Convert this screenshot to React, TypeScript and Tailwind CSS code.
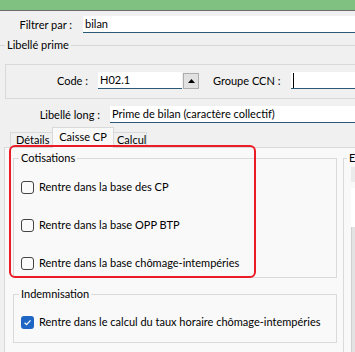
import React from 'react'

function Check({ checked, label }: { checked?: boolean; label: string }) {
  return (
    <div className="flex items-center h-[14px] ml-[7px]">
      {checked ? (
        <div className="w-[13px] h-[13px] rounded-[3px] bg-[#1f66c4] flex items-center justify-center">
          <svg width="9" height="9" viewBox="0 0 9 9">
            <path d="M1.6 4.7 L3.6 6.6 L7.5 2.4" fill="none" stroke="white" strokeWidth="1.2" />
          </svg>
        </div>
      ) : (
        <div className="w-[13px] h-[13px] rounded-[3px] border border-[#444444] bg-[#fbfbfb]" />
      )}
      <span className="ml-[5px] whitespace-nowrap">{label}</span>
    </div>
  )
}

function Input({ value, className = '', cursor }: { value?: string; className?: string; cursor?: boolean }) {
  return (
    <div className={`h-[17px] bg-white border-b border-[#2b5a78] flex items-center pl-[2px] whitespace-nowrap overflow-hidden ${className}`}>
      {cursor && <div className="w-px h-[15px] bg-black" />}
      {value}
    </div>
  )
}

export default function App() {
  return (
    <div className="relative w-[355px] h-[352px] overflow-hidden bg-[#f0f0f0] text-[11px] leading-[14px] text-black [font-family:Lato,'Liberation_Sans',sans-serif]">
      <div className="h-[10px] bg-[#80c080]" />
      <div className="h-px bg-[#6b6b6b]" />

      {/* filtre */}
      <div className="flex items-center h-[17px] mt-[5px]">
        <span className="w-[72px] text-right">Filtrer par :</span>
        <Input value="bilan" className="ml-[11px] flex-1" />
      </div>

      <fieldset className="mt-[5px] border-t border-[#d6d6d6] w-[420px]">
        <legend className="ml-[5px] px-[2px]">Libellé prime</legend>
        <div className="mt-[12px] ml-[5px] h-[35px] border border-[#d9d9d9] flex items-start pt-[7px]">
          <span className="w-[82px] h-[17px] flex items-center justify-end">Code :</span>
          <Input value="H02.1" className="ml-[10px] w-[84px]" />
          <div className="ml-[1px] mt-[1px] w-[16px] h-[16px] border border-[#adadad] bg-[#e1e1e1] flex items-center justify-center">
            <svg width="7" height="4" viewBox="0 0 7 4">
              <path d="M0 4 L3.5 0 L7 4 Z" fill="#000" />
            </svg>
          </div>
          <span className="ml-[14px] h-[17px] flex items-center whitespace-nowrap">Groupe CCN :</span>
          <Input cursor className="ml-[11px] flex-1" />
        </div>
        <div className="mt-[7px] flex items-center h-[17px]">
          <span className="w-[100px] text-right">Libellé long :</span>
          <Input value="Prime de bilan (caractère collectif)" className="ml-[10px] flex-1" />
        </div>
      </fieldset>

      {/* onglets */}
      <div className="mt-[4px] flex items-end h-[20px]">
        <div className="ml-[10px] h-[15px] w-[42px] pl-[5px] border-l border-t border-[#d9d9d9] flex items-center">Détails</div>
        <div className="relative -mb-px h-[21px] w-[62px] border border-b-0 border-[#d9d9d9] bg-[#f9f9f9] flex justify-center pt-[2px]">
          Caisse CP
        </div>
        <div className="h-[15px] pl-[3px] w-[33px] border-r border-t border-[#d9d9d9] flex items-center">Calcul</div>
      </div>

      <div className="ml-[4px] h-[220px] border-l border-t border-[#d9d9d9] bg-[#f9f9f9] flex pl-[8px] pt-[3px]">
        <div className="w-[324px] shrink-0">
          <fieldset className="border border-[#dadada] pb-[7px]">
            <legend className="ml-[5px] px-[2px]">Cotisations</legend>
            <div className="mt-[15px] flex flex-col gap-[24px]">
              <Check label="Rentre dans la base des CP" />
              <Check label="Rentre dans la base OPP BTP" />
              <Check label="Rentre dans la base chômage-intempéries" />
            </div>
          </fieldset>
          <fieldset className="mt-[9px] border border-[#dadada] pb-[13px]">
            <legend className="ml-[5px] px-[2px]">Indemnisation</legend>
            <div className="mt-[14px]">
              <Check checked label="Rentre dans le calcul du taux horaire chômage-intempéries" />
            </div>
          </fieldset>
        </div>
        <fieldset className="ml-[6px] w-[60px] shrink-0 border-l border-t border-[#dadada]">
          <legend className="ml-[3px] pl-[2px] pr-0">E</legend>
          <div className="ml-[7px] mt-[2px] h-[15px] bg-[#ebebeb]" />
          <div className="ml-[7px] mt-[6px] h-[39px] bg-white" />
          <div className="ml-[7px] h-[140px] bg-[#e3e3e3] border-l border-[#d0d0d0]" />
        </fieldset>
      </div>

      {/* annotation */}
      <div className="absolute left-[9px] top-[145px] w-[247px] h-[133px] border-2 border-[#ec1c24] rounded-[6px]" />
    </div>
  )
}
